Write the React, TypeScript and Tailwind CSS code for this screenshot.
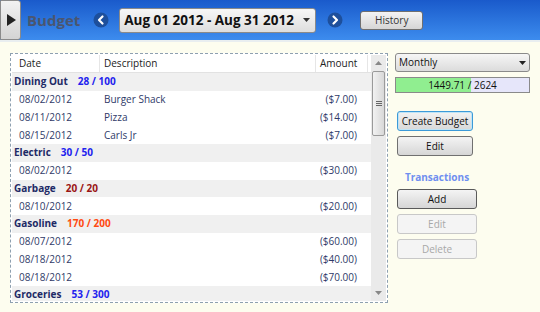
import React from 'react'

type Tx = { date: string; desc?: string; amount: string }
type Group = { name: string; spent: string; color: string; rows: Tx[] }

const groups: Group[] = [
  {
    name: 'Dining Out',
    spent: '28 / 100',
    color: 'text-[#2222ee]',
    rows: [
      { date: '08/02/2012', desc: 'Burger Shack', amount: '($7.00)' },
      { date: '08/11/2012', desc: 'Pizza', amount: '($14.00)' },
      { date: '08/15/2012', desc: 'Carls Jr', amount: '($7.00)' },
    ],
  },
  { name: 'Electric', spent: '30 / 50', color: 'text-[#2222ee]', rows: [{ date: '08/02/2012', amount: '($30.00)' }] },
  { name: 'Garbage', spent: '20 / 20', color: 'text-[#9a1414]', rows: [{ date: '08/10/2012', amount: '($20.00)' }] },
  {
    name: 'Gasoline',
    spent: '170 / 200',
    color: 'text-[#ff4a10]',
    rows: [
      { date: '08/07/2012', amount: '($60.00)' },
      { date: '08/18/2012', amount: '($40.00)' },
      { date: '08/18/2012', amount: '($70.00)' },
    ],
  },
  { name: 'Groceries', spent: '53 / 300', color: 'text-[#2222ee]', rows: [] },
]

function RoundArrow({ dir }: { dir: 'left' | 'right' }) {
  return (
    <svg width="16" height="16" viewBox="0 0 16 16">
      <circle cx="8" cy="8" r="7.5" fill="#1d4f9c" />
      <path
        d={dir === 'left' ? 'M9.5 4.5 L6 8 L9.5 11.5' : 'M6.5 4.5 L10 8 L6.5 11.5'}
        stroke="white"
        strokeWidth="2.2"
        fill="none"
        strokeLinecap="round"
        strokeLinejoin="round"
      />
    </svg>
  )
}

function WinButton({ label, className = '', disabled = false, focused = false }: { label: string; className?: string; disabled?: boolean; focused?: boolean }) {
  return (
    <div
      className={
        'flex items-center justify-center whitespace-nowrap rounded-[3px] border text-[10px] ' +
        (disabled
          ? 'border-[#c8c8c8] bg-[#f4f4f4] text-[#a8a8a8] '
          : focused
          ? 'border-[#3c9ad8] bg-gradient-to-b from-[#f2f2f2] to-[#d8d8d8] text-[#111] shadow-[inset_0_0_0_1px_#bfe4f6] '
          : 'border-[#707070] bg-gradient-to-b from-[#f4f4f4] to-[#d6d6d6] text-[#111] ') +
        className
      }
    >
      {label}
    </div>
  )
}

export default function App() {
  return (
    <div className="w-[540px] h-[312px] overflow-hidden bg-[#fdfdef] text-[10px]" style={{ fontFamily: '"Open Sans", "Noto Sans", sans-serif' }}>
      {/* top bar */}
      <div className="h-[42px] flex items-center bg-gradient-to-b from-[#1a5acb] to-[#3d8cee] border-b-2 border-[#e9eef0]">
        <div className="w-[21px] h-[40px] flex items-center justify-center bg-gradient-to-b from-[#f2f2f2] to-[#d4d4d4] border border-[#8a8a8a] rounded-r-[3px]">
          <svg width="10" height="12" viewBox="0 0 10 12">
            <path d="M1 0 L10 6 L1 12 Z" fill="#222" />
          </svg>
        </div>
        <span className="ml-[6px] text-[15px] font-bold text-[#4a5670]">Budget</span>
        <div className="ml-[13px]">
          <RoundArrow dir="left" />
        </div>
        <div className="ml-[10px] w-[197px] h-[25px] flex items-center justify-between pl-[4px] pr-[5px] rounded-[3px] border border-[#8a8a8a] bg-gradient-to-b from-[#f7f7f7] to-[#dedede]">
          <span className="whitespace-nowrap text-[13.5px] font-bold text-[#111]">Aug 01 2012 - Aug 31 2012</span>
          <svg width="7" height="4" viewBox="0 0 7 4">
            <path d="M0 0 L7 0 L3.5 4 Z" fill="#333" />
          </svg>
        </div>
        <div className="ml-[11px]">
          <RoundArrow dir="right" />
        </div>
        <WinButton label="History" className="ml-[17px] w-[63px] h-[19px] !text-[#333]" />
      </div>

      <div className="flex pt-[11px]">
        {/* grid */}
        <div className="ml-[10px] w-[378px] h-[250px] border border-dashed border-[#8ea0b0] bg-white p-[1px] flex">
          <div className="flex-1 flex flex-col overflow-hidden">
            <div className="h-[18px] shrink-0 flex items-center border-b border-[#e2e2e2] text-[#222]">
              <div className="w-[88px] pl-[7px] h-full flex items-center border-r border-[#e6e6e6]">Date</div>
              <div className="w-[216px] pl-[4px] h-full flex items-center border-r border-[#e6e6e6]">Description</div>
              <div className="w-[52px] pl-[4px] h-full flex items-center border-r border-[#e6e6e6]">Amount</div>
            </div>
            {groups.map((g) => (
              <React.Fragment key={g.name}>
                <div className="h-[17.75px] shrink-0 flex items-center bg-[#f0f0f0] pl-[2px] font-bold">
                  <span className="text-[#1e2a66]">{g.name}</span>
                  <span className={'ml-[10px] ' + g.color}>{g.spent}</span>
                </div>
                {g.rows.map((r, i) => (
                  <div key={i} className="h-[17.75px] shrink-0 flex items-center text-[#2f3a68]">
                    <div className="w-[88px] pl-[7px]">{r.date}</div>
                    <div className="w-[216px] pl-[4px]">{r.desc ?? ''}</div>
                    <div className="w-[41px] text-right">{r.amount}</div>
                  </div>
                ))}
              </React.Fragment>
            ))}
          </div>
          {/* scrollbar */}
          <div className="w-[15px] flex flex-col bg-[#eaeaea]">
            <div className="h-[16px] flex items-center justify-center">
              <svg width="7" height="4" viewBox="0 0 7 4">
                <path d="M0 4 L7 4 L3.5 0 Z" fill="#888" />
              </svg>
            </div>
            <div className="mx-[1px] h-[65px] rounded-[2px] border border-[#9a9a9a] bg-gradient-to-r from-[#f2f2f2] to-[#d8d8d8] flex items-center justify-center">
              <div className="flex flex-col gap-[1px]">
                <div className="w-[6px] h-[1px] bg-[#666]" />
                <div className="w-[6px] h-[1px] bg-[#666]" />
                <div className="w-[6px] h-[1px] bg-[#666]" />
              </div>
            </div>
            <div className="flex-1" />
            <div className="h-[16px] flex items-center justify-center">
              <svg width="7" height="4" viewBox="0 0 7 4">
                <path d="M0 0 L7 0 L3.5 4 Z" fill="#888" />
              </svg>
            </div>
          </div>
        </div>

        {/* right panel */}
        <div className="ml-[7px] w-[135px] flex flex-col">
          <div className="h-[19px] flex items-center justify-between px-[3px] rounded-[3px] border border-[#8a8a8a] bg-gradient-to-b from-[#f6f6f6] to-[#dcdcdc] text-[#111]">
            <span>Monthly</span>
            <svg width="7" height="4" viewBox="0 0 7 4">
              <path d="M0 0 L7 0 L3.5 4 Z" fill="#222" />
            </svg>
          </div>
          <div className="mt-[5px] h-[16px] relative flex border border-[#8a8a8a] bg-[#e6e6fa]">
            <div className="w-[75px] bg-[#90ee90]" />
            <span className="absolute inset-0 flex items-center justify-center text-[#111]">1449.71 / 2624</span>
          </div>
          <WinButton label="Create Budget" focused className="mt-[18px] ml-[2px] w-[76px] h-[20px]" />
          <WinButton label="Edit" className="mt-[5px] ml-[2px] w-[76px] h-[20px]" />
          <div className="mt-[14px] ml-[2px] w-[80px] text-center font-bold text-[#6f8ff0]">Transactions</div>
          <WinButton label="Add" className="mt-[4px] ml-[2px] w-[80px] h-[20px] !border-[#5a5a5a]" />
          <WinButton label="Edit" disabled className="mt-[5px] ml-[2px] w-[80px] h-[20px]" />
          <WinButton label="Delete" disabled className="mt-[5px] ml-[2px] w-[80px] h-[20px]" />
        </div>
      </div>
    </div>
  )
}
